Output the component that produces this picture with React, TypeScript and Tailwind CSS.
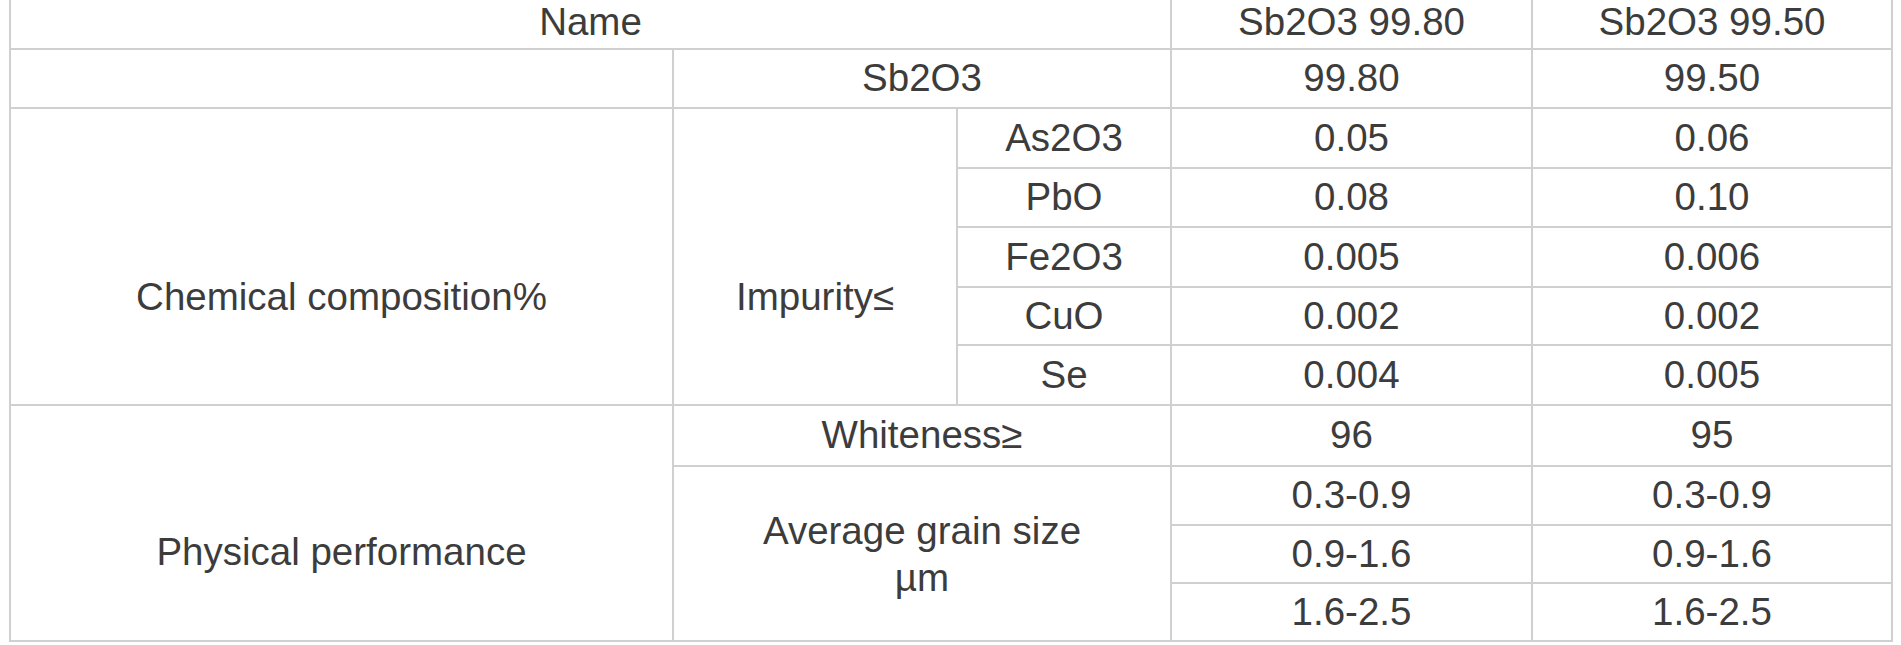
const font = { fontFamily: '"Liberation Sans", Arial, sans-serif' };

function Cell({ children, className = '' }: { children?: React.ReactNode; className?: string }) {
  return (
    <div className={`bg-white flex items-center justify-center text-center ${className}`}>
      {children}
    </div>
  );
}

const rows: { label: string; a: string; b: string }[] = [
  { label: 'As2O3', a: '0.05', b: '0.06' },
  { label: 'PbO', a: '0.08', b: '0.10' },
  { label: 'Fe2O3', a: '0.005', b: '0.006' },
  { label: 'CuO', a: '0.002', b: '0.002' },
  { label: 'Se', a: '0.004', b: '0.005' },
];

const grains: [string, string][] = [
  ['0.3-0.9', '0.3-0.9'],
  ['0.9-1.6', '0.9-1.6'],
  ['1.6-2.5', '1.6-2.5'],
];

export default function App() {
  return (
    <div className="h-[645px] w-full overflow-hidden bg-white" style={font}>
      {/* top edge of the table is cropped off in the shot */}
      <div className="ml-[9px] w-fit bg-[#d0d0d0] px-[2px] pb-[2px]">
        <div className="grid grid-cols-[661px_282px_212px_359px_358px] grid-rows-[48px_57px_58px_57px_58px_56px_58px_59px_57px_56px_56px] gap-[2px] text-[38.5px] leading-none text-[#3c3c3c]">
          {/* header */}
          <Cell className="col-span-3 pb-[4px]">Name</Cell>
          <Cell className="pb-[4px]">Sb2O3 99.80</Cell>
          <Cell className="pb-[4px]">Sb2O3 99.50</Cell>

          {/* main content */}
          <Cell />
          <Cell className="col-span-2">Sb2O3</Cell>
          <Cell>99.80</Cell>
          <Cell>99.50</Cell>

          {/* chemical composition */}
          <Cell className="row-span-5 pt-[82px]">Chemical composition%</Cell>
          <Cell className="row-span-5 pt-[82px]">Impurity≤</Cell>
          {rows.map((r) => (
            <div key={r.label} className="contents">
              <Cell className="col-start-3">{r.label}</Cell>
              <Cell>{r.a}</Cell>
              <Cell>{r.b}</Cell>
            </div>
          ))}

          {/* physical performance */}
          <Cell className="row-span-4 pt-[58px]">Physical performance</Cell>
          <Cell className="col-span-2">Whiteness≥</Cell>
          <Cell>96</Cell>
          <Cell>95</Cell>
          <Cell className="col-span-2 row-span-3 flex-col leading-[47px]">
            <span>Average grain size</span>
            <span>µm</span>
          </Cell>
          {grains.map(([a, b], i) => (
            <div key={i} className="contents">
              <Cell className="col-start-4">{a}</Cell>
              <Cell>{b}</Cell>
            </div>
          ))}
        </div>
      </div>
    </div>
  );
}
